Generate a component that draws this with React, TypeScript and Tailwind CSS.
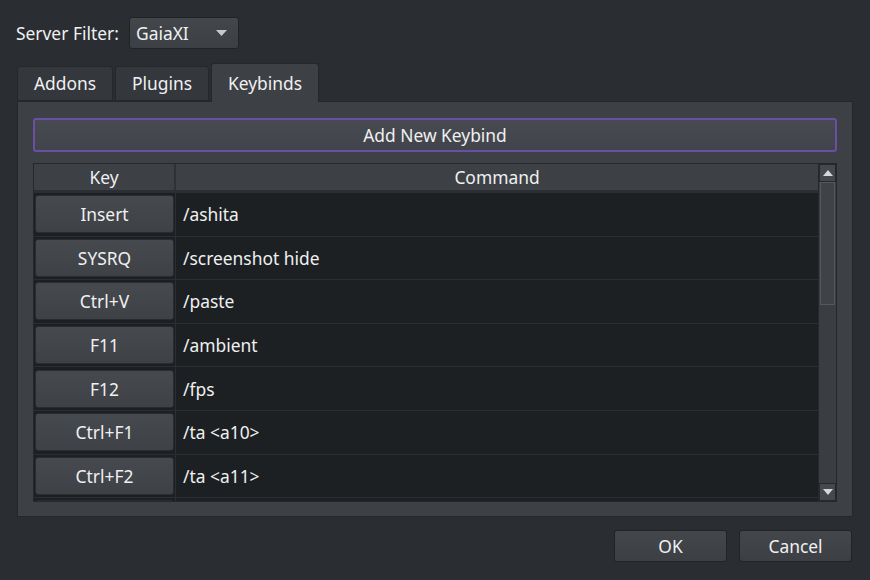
import React from 'react';

const rows: [string, string][] = [
  ['Insert', '/ashita'],
  ['SYSRQ', '/screenshot hide'],
  ['Ctrl+V', '/paste'],
  ['F11', '/ambient'],
  ['F12', '/fps'],
  ['Ctrl+F1', '/ta <a10>'],
  ['Ctrl+F2', '/ta <a11>'],
  ['', ''],
];

const Tab: React.FC<{ label: string; active?: boolean; w: string }> = ({ label, active, w }) => (
  <div
    className={
      active
        ? `${w} h-[39px] -mb-px flex items-center justify-center rounded-t-[3px] border border-b-0 border-[#25272b] bg-[#3d4045] relative z-10`
        : `${w} h-[35px] flex items-center justify-center rounded-t-[3px] border border-[#25272b] bg-[#34373b]`
    }
  >
    {label}
  </div>
);

export default function App() {
  return (
    <div
      className="w-[870px] h-[580px] bg-[#2a2d31] text-[#eff0f1] text-[17.4px] overflow-hidden"
      style={{ fontFamily: '"Noto Sans", "Open Sans", sans-serif' }}
    >
      <div className="flex items-center pt-[17px] pl-[16px] h-[49px]">
        <span className="w-[113px] whitespace-nowrap">Server Filter:</span>
        <div className="w-[110px] h-[32px] flex items-center justify-between pl-[6px] pr-[11px] rounded-[3px] border border-[#212326] bg-gradient-to-b from-[#43464b] to-[#3c3f43]">
          <span>GaiaXI</span>
          <svg width="11" height="6" viewBox="0 0 11 6">
            <path d="M0 0 L11 0 L5.5 6 Z" fill="#c8c9cb" />
          </svg>
        </div>
      </div>

      <div className="ml-[17px] mt-[13px] flex items-end gap-[2px] h-[39px]">
        <Tab label="Addons" w="w-[96px]" />
        <Tab label="Plugins" w="w-[94px]" />
        <Tab label="Keybinds" w="w-[108px]" active />
      </div>

      <div className="ml-[17px] w-[836px] h-[416px] border border-[#25272b] bg-[#3d4045] px-[15px] pt-[16px]">
        <div className="h-[34px] flex items-center justify-center rounded-[3px] border-2 border-[#6a4fa4] bg-gradient-to-b from-[#474a50] to-[#41444a]">
          Add New Keybind
        </div>

        <div className="mt-[11px] h-[339px] flex border border-[#26282c] bg-[#1d2023]">
          <div className="flex-1 flex flex-col overflow-hidden">
            <div className="h-[29px] flex shrink-0 bg-[#3d4045] border-b-[3px] border-[#2b2e32]">
              <div className="w-[142px] flex items-center justify-center border-r-[2px] border-[#2e3135]">Key</div>
              <div className="flex-1 flex items-center justify-center">Command</div>
            </div>
            {rows.map(([k, c], i) => (
              <div key={i} className="h-[43.6px] shrink-0 flex border-b border-[#2b2e32]">
                <div className="w-[142px] shrink-0 flex items-center pl-[1px] pr-[1px] border-r border-[#2b2e32]">
                  <div className="w-full h-[38px] flex items-center justify-center rounded-[3px] border border-[#2a2c30] bg-gradient-to-b from-[#46494e] to-[#3e4146]">
                    {k}
                  </div>
                </div>
                <div className="flex-1 flex items-center pl-[7px]">{c}</div>
              </div>
            ))}
          </div>
          <div className="w-[18px] flex flex-col bg-[#3a3d41] border-l border-[#26282c]">
            <div className="h-[18px] flex items-center justify-center border border-[#26282c] bg-[#45484c]">
              <svg width="10" height="6" viewBox="0 0 10 6">
                <path d="M0 6 L10 6 L5 0 Z" fill="#d6d7d8" />
              </svg>
            </div>
            <div className="h-[123px] mx-[1px] border border-[#55585c] bg-[#3f4246]" />
            <div className="flex-1" />
            <div className="h-[18px] flex items-center justify-center border border-[#26282c] bg-[#45484c]">
              <svg width="10" height="6" viewBox="0 0 10 6">
                <path d="M0 0 L10 0 L5 6 Z" fill="#d6d7d8" />
              </svg>
            </div>
          </div>
        </div>
      </div>

      <div className="flex justify-end gap-[12px] pr-[18px] mt-[13px]">
        <div className="w-[113px] h-[32px] flex items-center justify-center rounded-[3px] border border-[#212326] bg-gradient-to-b from-[#43464b] to-[#3c3f43]">
          OK
        </div>
        <div className="w-[113px] h-[32px] flex items-center justify-center rounded-[3px] border border-[#212326] bg-gradient-to-b from-[#43464b] to-[#3c3f43]">
          Cancel
        </div>
      </div>
    </div>
  );
}
